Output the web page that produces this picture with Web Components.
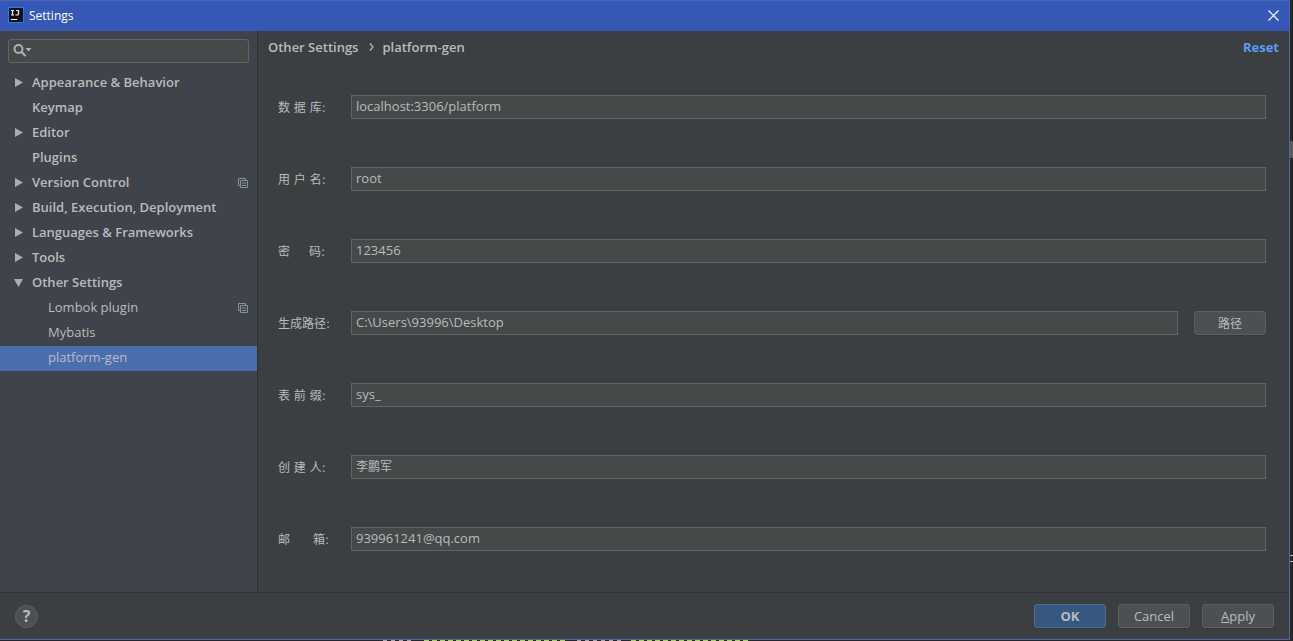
<!DOCTYPE html>
<html lang="en">
<head>
<meta charset="utf-8">
<title>Settings</title>
<style>
html, body { height: 100%; margin: 0; }
body {
  background: linear-gradient(#5c5b4c, #5c5b4c) right 141px / 3px 17px no-repeat,
    linear-gradient(#d8b48c, #d8b48c) right 555px / 3px 1px no-repeat,
    linear-gradient(#d8b48c, #d8b48c) right 561px / 3px 1px no-repeat, #272822;
  color: #bbbbbb;
  font: 13px/18px "Open Sans", "Noto Sans CJK SC", sans-serif;
}
</style>
</head>
<body>
<settings-window>
  <title-bar slot="title">Settings</title-bar>
  <settings-tree slot="tree">
    <tree-item state="closed">Appearance &amp; Behavior</tree-item>
    <tree-item>Keymap</tree-item>
    <tree-item state="closed">Editor</tree-item>
    <tree-item>Plugins</tree-item>
    <tree-item state="closed" project>Version Control</tree-item>
    <tree-item state="closed">Build, Execution, Deployment</tree-item>
    <tree-item state="closed">Languages &amp; Frameworks</tree-item>
    <tree-item state="closed">Tools</tree-item>
    <tree-item state="open">Other Settings</tree-item>
    <tree-item child project>Lombok plugin</tree-item>
    <tree-item child>Mybatis</tree-item>
    <tree-item child selected>platform-gen</tree-item>
  </settings-tree>
  <settings-header slot="page"></settings-header>
  <settings-form slot="page">
    <form-row label="数 据 库:" value="localhost:3306/platform"></form-row>
    <form-row label="用 户 名:" value="root"></form-row>
    <form-row label="密     码:" value="123456"></form-row>
    <form-row label="生成路径:" value="C:\Users\93996\Desktop"><push-button cjk>路径</push-button></form-row>
    <form-row label="表 前 缀:" value="sys_"></form-row>
    <form-row label="创 建 人:" value="李鹏军" cjk></form-row>
    <form-row label="邮      箱:" value="939961241@qq.com"></form-row>
  </settings-form>
  <help-button slot="help"></help-button>
  <push-button slot="actions" primary>OK</push-button>
  <push-button slot="actions">Cancel</push-button>
  <push-button slot="actions"><u>A</u>pply</push-button>
</settings-window>

<script>
const define = (name, render) => customElements.define(name, class extends HTMLElement {
  constructor() {
    super();
    this.attachShadow({ mode: "open" });
  }
  connectedCallback() {
    this.shadowRoot.innerHTML = render(this);
  }
});

define("settings-window", () => `
<style>
:host { display: flex; flex-direction: column; box-sizing: border-box; min-height: 100vh; padding: 0 3px 1px 0; }
.window { flex: 1; display: flex; flex-direction: column; background: #3c3f41; border: solid #4a66b4; border-width: 1px 1px 1px 0; }
.body { flex: 1; display: grid; grid-template-columns: 258px 1fr; }
aside { background: #3f434c; border-right: 1px solid #323232; }
main { min-width: 0; }
footer { display: flex; align-items: center; gap: 12px; height: 46px; padding: 0 15px; border-top: 1px solid #323232; }
.space { flex: 1; }
.behind { position: absolute; left: 217px; right: 3px; bottom: 0; height: 1px;
  background: repeating-linear-gradient(90deg, #a6e22e 0 5px, #272822 5px 8px) 207px 0 / 142px 1px no-repeat,
    repeating-linear-gradient(90deg, #a6e22e 0 5px, #272822 5px 8px) 414px 0 / 120px 1px no-repeat,
    repeating-linear-gradient(90deg, #b9a79b 0 4px, #272822 4px 8px) 166px 0 / 30px 1px no-repeat,
    repeating-linear-gradient(90deg, #b9a79b 0 4px, #272822 4px 8px) 360px 0 / 46px 1px no-repeat, #272822; }
</style>
<div class="window">
  <slot name="title"></slot>
  <div class="body">
    <aside><slot name="tree"></slot></aside>
    <main><slot name="page"></slot></main>
  </div>
  <footer><slot name="help"></slot><span class="space"></span><slot name="actions"></slot></footer>
</div>
<div class="behind"></div>`);

define("title-bar", () => `
<style>
:host { display: flex; align-items: center; box-sizing: border-box; height: 30px; padding: 0 10px 2px 8px; background: #3557b5; color: #fff; font-size: 12px; }
.logo { margin-right: 5px; }
svg { display: block; }
.name { flex: 1; padding-top: 2px; }
button { padding: 0; border: 0; background: none; }
</style>
<svg class="logo" width="16" height="16" viewBox="0 0 16 16">
  <rect x=".5" y=".5" width="15" height="15" fill="#101010" stroke="#1583f0"/>
  <path d="M3 3.500H6M4.500 3V8M3 8H6M8 3.500H10.500V7Q10.500 8 9 8H7.500" stroke="#eee" stroke-width="1.200" fill="none"/>
  <path d="M3 12.500H9" stroke="#fff"/>
</svg>
<span class="name"><slot></slot></span>
<button aria-label="Close"><svg width="11" height="11" viewBox="0 0 11 11"><path d="M.5 .5 10.500 10.500M10.500 .5 .5 10.500" stroke="#fff" stroke-width="1.200"/></svg></button>`);

define("settings-tree", () => `
<style>
:host { display: block; }
.search { display: flex; align-items: center; height: 22px; margin: 8px; padding: 0 4px; background: #45494a; border: 1px solid #646464; border-radius: 3px; }
input { flex: 1; min-width: 0; border: 0; padding: 0; background: none; color: inherit; font: inherit; outline: 0; }
</style>
<div class="search">
  <svg width="20" height="16" viewBox="0 0 20 16"><circle cx="5.500" cy="6" r="4" fill="none" stroke="#afb1b3" stroke-width="2"/><path d="M8.500 9 12.500 13" stroke="#afb1b3" stroke-width="2.200"/><path d="M12.500 5h6l-3 3.500z" fill="#afb1b3"/></svg>
  <input type="text" aria-label="Search settings">
</div>
<div role="tree"><slot></slot></div>`);

define("tree-item", el => {
  const state = el.getAttribute("state");
  const arrow = state === "closed" ? '<path d="M1 2 9 6.500 1 11z"/>' : state === "open" ? '<path d="M0 3H9L4.500 11z"/>' : "";
  return `
<style>
:host { display: flex; align-items: center; box-sizing: border-box; height: 25px; padding: 0 9px 2px 14px; font-weight: 600; }
:host([child]) { padding-left: 30px; font-weight: 400; }
:host([selected]) { background: #4b6eaf; }
.arrow { width: 9px; height: 13px; margin-right: 9px; fill: #adadad; }
.text { flex: 1; padding-bottom: 2px; white-space: nowrap; }
</style>
<svg class="arrow" viewBox="0 0 9 13">${arrow}</svg>
<span class="text" role="treeitem"><slot></slot></span>
${el.hasAttribute("project") ? `<svg width="10" height="10" viewBox="0 0 10 10" fill="none" stroke="#87939a"><path d="M2 7.500H.5V.5H7.500V2"/><path d="M2.500 2.500H9.500V9.500H2.500zM4 5H8M4 7.500H8"/></svg>` : ""}`;
});

define("settings-header", () => `
<style>
:host { display: flex; align-items: center; height: 32px; padding: 0 10px; font-weight: 600; }
nav { flex: 1; display: flex; align-items: center; }
.sep { display: block; margin: 0 8px 0 11px; }
a { color: #589df6; text-decoration: none; font-weight: 700; }
</style>
<nav aria-label="Breadcrumb"><span>Other Settings</span>
<svg class="sep" width="5" height="8" viewBox="0 0 5 8"><path d="M1 .5 4 4 1 7.500" fill="none" stroke="#bbb" stroke-width="1.200"/></svg>
<span>platform-gen</span></nav>
<a href="#reset">Reset</a>`);

define("settings-form", () => `
<style>
:host { display: flex; flex-direction: column; gap: 48px; padding: 32px 23px 41px 20px; }
</style>
<slot></slot>`);

define("form-row", el => `
<style>
:host { display: flex; align-items: center; }
label { flex: none; width: 73px; padding-top: 2px; white-space: pre; font: 12px/18px "DejaVu Sans", "Noto Sans CJK SC", sans-serif; }
input { flex: 1; min-width: 0; box-sizing: border-box; height: 24px; margin: 0; padding: 0 4px 2px; background: #45494a; border: 1px solid #646464; border-radius: 0; color: inherit; font: inherit; outline: 0; }
:host([cjk]) input { font-size: 12px; }
::slotted(push-button) { margin-left: 16px; }
</style>
<label for="field">${el.getAttribute("label")}</label>
<input id="field" type="text" value="${el.getAttribute("value")}">
<slot></slot>`);

define("push-button", () => `
<style>
:host { display: block; }
button { display: block; box-sizing: border-box; width: 72px; height: 24px; padding: 0; background: #4c5052; border: 1px solid #5e6060; border-radius: 3px; box-shadow: 0 1px 1px #36393a; color: inherit; font: inherit; }
:host([primary]) button { background: #365880; border-color: #4c708c; font-weight: 700; }
:host([cjk]) button { padding-top: 2px; font-size: 12px; }
</style>
<button type="button"><slot></slot></button>`);

define("help-button", () => `
<style>
:host { display: block; }
button { display: block; box-sizing: border-box; width: 23px; height: 23px; padding: 0; background: #4c5052; border: 1px solid #5e6060; border-radius: 50%; color: inherit; font: 700 16px/20px "Open Sans", sans-serif; }
</style>
<button type="button" aria-label="Help">?</button>`);
</script>
</body>
</html>
